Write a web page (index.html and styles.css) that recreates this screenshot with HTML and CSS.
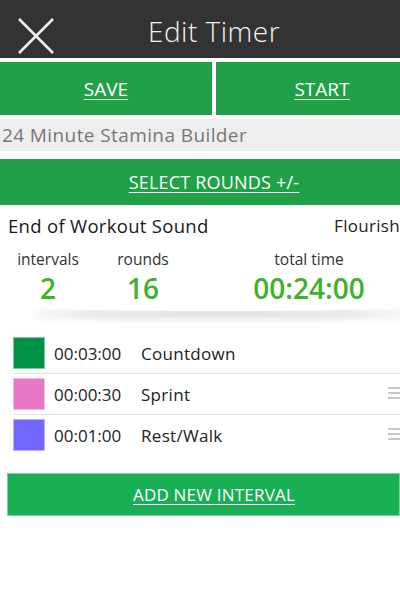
FILE: index.html
```html
<!DOCTYPE html>
<html>
<head>
<meta charset="utf-8">
<link rel="stylesheet" href="styles.css">
</head>
<body>
<div class="app">
  <header class="topbar">
    <svg class="close" width="36" height="36" viewBox="0 0 36 36"><path d="M1 1 L35 35 M35 1 L1 35" stroke="#eeeeee" stroke-width="2.6" fill="none"/></svg>
    <h1 class="title">Edit Timer</h1>
  </header>
  <div class="actions">
    <a class="btn">SAVE</a>
    <a class="btn start">START</a>
  </div>
  <div class="name">24 Minute Stamina Builder</div>
  <a class="btn wide">SELECT ROUNDS +/-</a>
  <div class="card">
    <div class="sound">
      <span class="sound-label">End of Workout Sound</span>
      <span class="sound-value">Flourish</span>
    </div>
    <div class="stats">
      <div class="stat s1"><div class="lbl">intervals</div><div class="val">2</div></div>
      <div class="stat s2"><div class="lbl">rounds</div><div class="val">16</div></div>
      <div class="stat s3"><div class="lbl">total time</div><div class="val">00:24:00</div></div>
    </div>
  </div>
  <ul class="list">
    <li class="row"><span class="sw green"></span><span class="time">00:03:00</span><span class="nm">Countdown</span></li>
    <li class="row"><span class="sw pink"></span><span class="time">00:00:30</span><span class="nm">Sprint</span><span class="handle"></span></li>
    <li class="row"><span class="sw violet"></span><span class="time">00:01:00</span><span class="nm">Rest/Walk</span><span class="handle"></span></li>
  </ul>
  <a class="btn add">ADD NEW INTERVAL</a>
</div>
</body>
</html>
```

FILE: styles.css
```css
html, body { margin: 0; padding: 0; background: #fff; overflow: hidden; }
body { width: 400px; height: 600px; }
.app {
  width: 400px;
  font-family: "Open Sans", "DejaVu Sans", sans-serif;
  color: #222;
}
.topbar {
  position: relative;
  height: 58px;
  background: #333333;
  display: flex;
  align-items: center;
  justify-content: center;
  padding-left: 28px;
}
.close { position: absolute; left: 18px; top: 18px; }
.title {
  margin: 0;
  font-weight: 300;
  font-size: 28px;
  color: #f2f2f2;
  letter-spacing: 0.5px;
  padding-top: 4px;
}
.actions {
  display: grid;
  grid-template-columns: 212px 1fr;
  gap: 4px;
  margin-top: 4px;
}
.btn {
  display: flex;
  align-items: center;
  justify-content: center;
  background: #20a148;
  color: #fff;
  text-decoration: underline;
  text-underline-offset: 3px;
  font-size: 19px;
  height: 53px;
  box-sizing: border-box;
}
.btn.start { padding-left: 28px; }
.name {
  margin-top: 4px;
  height: 32px;
  background: #eeeeee;
  color: #777;
  font-size: 19px;
  letter-spacing: 0.4px;
  line-height: 32px;
  padding-left: 2px;
}
.btn.wide { margin-top: 8px; height: 46px; font-size: 18px; padding-left: 28px; letter-spacing: 0.2px; }
.card {
  position: relative;
  padding: 0 0 4px 0;
  background: #fff;
}
.card::after {
  content: "";
  position: absolute;
  left: 30px;
  right: -10px;
  bottom: 0;
  height: 10px;
  border-radius: 50%;
  box-shadow: 0 8px 9px -3px rgba(0,0,0,0.3);
}
.sound {
  display: flex;
  justify-content: space-between;
  align-items: center;
  height: 40px;
  padding-left: 8px;
}
.sound-label { font-size: 18.5px; color: #1a1a1a; letter-spacing: 0.3px; }
.sound-value { font-size: 17px; color: #222; letter-spacing: 0.3px; }
.stats { display: flex; margin-top: 3px; }
.stat { text-align: center; flex-shrink: 0; box-sizing: border-box; }
.s1 { width: 96px; }
.s2 { width: 94px; }
.s3 { width: 210px; padding-left: 28px; }
.lbl { font-size: 15.5px; color: #333; line-height: 22px; }
.val { font-size: 28px; font-weight: 600; color: #3fb12a; line-height: 38px; margin-top: -1px; }
.list { list-style: none; margin: 22px 0 0 13px; padding: 0; }
.row {
  display: flex;
  align-items: center;
  height: 40px;
  border-bottom: 1px solid #e3e3e3;
  position: relative;
  font-size: 17px;
  color: #222;
}
.row:last-child { border-bottom: none; }
.sw { width: 32px; height: 32px; margin-left: 0; box-sizing: border-box; border: 1px solid rgba(255,255,255,0.5); }
.green { background: #009245; }
.pink { background: #ea78c8; }
.violet { background: #7366ff; }
.time { margin-left: 9px; width: 87px; }
.nm { letter-spacing: 0.3px; }
.handle {
  position: absolute;
  left: 375px;
  top: 13px;
  width: 14px;
  height: 12px;
  background: linear-gradient(#c8c8c8 0 2px, transparent 2px 5px, #c8c8c8 5px 7px, transparent 7px 10px, #c8c8c8 10px 12px);
}
.btn.add {
  margin: 18px 0 0 7px;
  height: 43px;
  background: #19af54;
  font-size: 17px;
  border: 1px solid #7bd39c;
  padding-left: 21px;
  letter-spacing: 0.2px;
}
```
